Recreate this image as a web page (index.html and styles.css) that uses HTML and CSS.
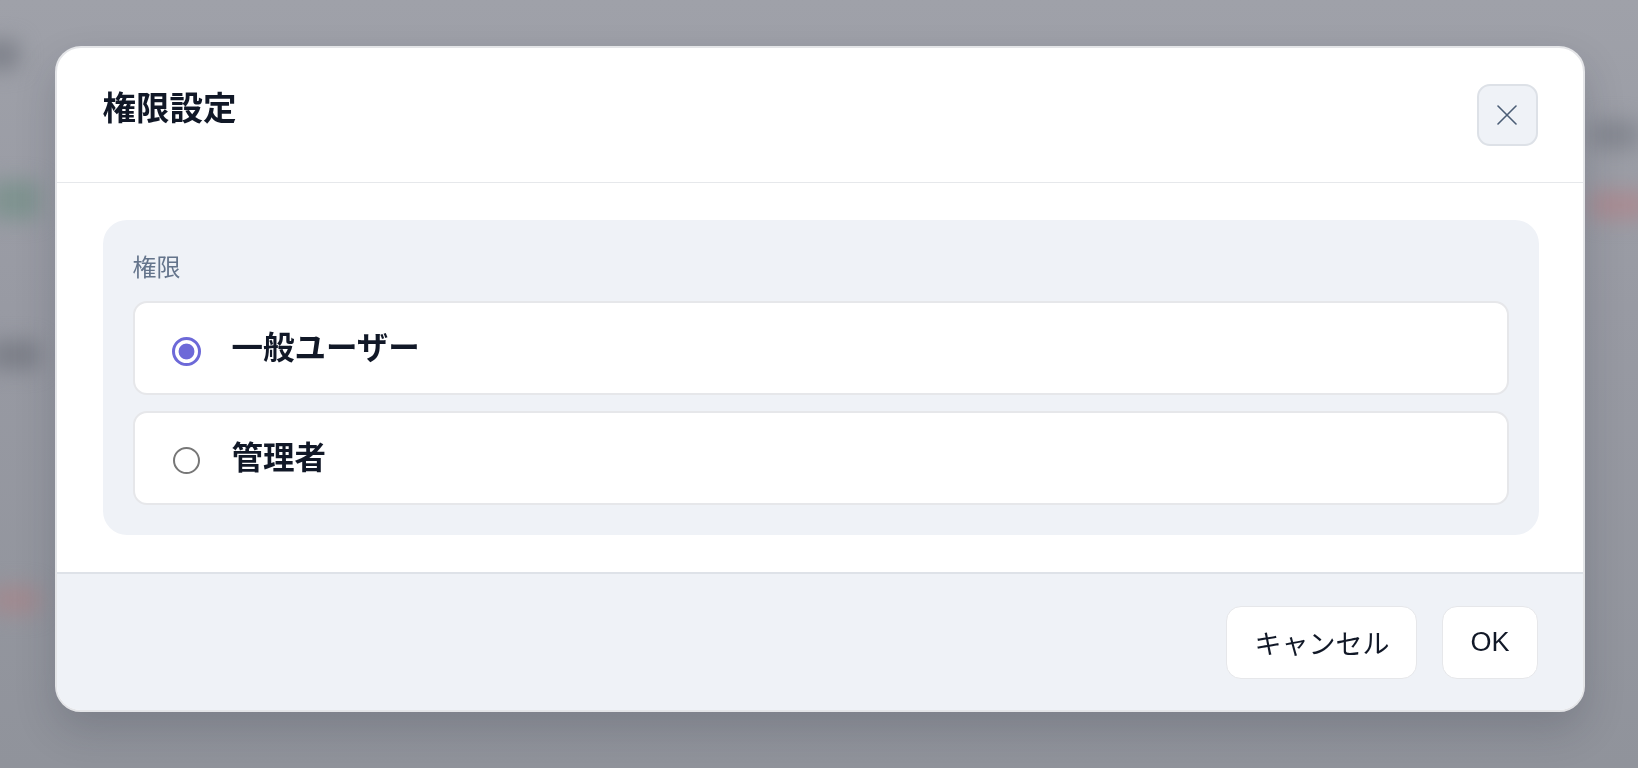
FILE: index.html
```html
<!DOCTYPE html>
<html lang="ja">
<head>
<meta charset="utf-8">
<title>権限設定</title>
<link rel="stylesheet" href="styles.css">
</head>
<body>
<div class="backdrop" aria-hidden="true">
  <div class="blob blob-a"></div>
  <div class="blob blob-b"></div>
  <div class="blob blob-c"></div>
  <div class="blob blob-d"></div>
  <div class="blob blob-e"></div>
  <div class="blob blob-f"></div>
</div>
<div class="overlay">
  <div class="modal" role="dialog" aria-labelledby="modal-title">
    <div class="modal-header">
      <h2 class="modal-title" id="modal-title">権限設定</h2>
      <button class="close-btn" type="button" aria-label="閉じる">
        <svg width="20" height="20" viewBox="0 0 20 20" fill="none" stroke="#4b5d75" stroke-width="1.6" stroke-linecap="round">
          <path d="M1 1L19 19M19 1L1 19"/>
        </svg>
      </button>
    </div>
    <div class="modal-body">
      <div class="field-card">
        <div class="field-label">権限</div>
        <div class="options">
          <label class="option">
            <input class="radio" type="radio" name="role" checked>
            <span class="option-text">一般ユーザー</span>
          </label>
          <label class="option">
            <input class="radio" type="radio" name="role">
            <span class="option-text">管理者</span>
          </label>
        </div>
      </div>
    </div>
    <div class="modal-footer">
      <button class="btn" type="button">キャンセル</button>
      <button class="btn" type="button">OK</button>
    </div>
  </div>
</div>
</body>
</html>
```
FILE: styles.css
```css
* { box-sizing: border-box; }

html, body {
  margin: 0;
  padding: 0;
}

body {
  width: 1638px;
  height: 768px;
  overflow: hidden;
  position: relative;
  background: linear-gradient(180deg, #9fa1a9 0%, #989aa3 40%, #90939b 100%);
  font-family: "Liberation Sans", "Noto Sans CJK JP", sans-serif;
  color: #0f172a;
}

.backdrop {
  position: absolute;
  inset: 0;
  filter: blur(10px);
  z-index: 0;
}

.blob {
  position: absolute;
  border-radius: 8px;
}
.blob-a { left: -20px; top: 40px; width: 40px; height: 30px; background: #80838c; }
.blob-b { left: -10px; top: 180px; width: 50px; height: 40px; background: #7f9390; }
.blob-c { left: -10px; top: 340px; width: 50px; height: 30px; background: #7c7f88; }
.blob-d { left: -10px; top: 585px; width: 50px; height: 30px; background: #a08a90; }
.blob-e { left: 1590px; top: 190px; width: 60px; height: 30px; background: #a88c93; }
.blob-f { left: 1590px; top: 120px; width: 50px; height: 30px; background: #858891; }

.overlay {
  position: relative;
  z-index: 1;
  display: flex;
  justify-content: center;
  padding-top: 46px;
  padding-left: 1px;
}

.modal {
  width: 1530px;
  background: #ffffff;
  border: 2px solid #e4e5e8;
  border-radius: 26px;
  overflow: hidden;
  box-shadow: 0 18px 40px rgba(30, 35, 50, 0.18);
}

.modal-header {
  display: flex;
  justify-content: space-between;
  align-items: flex-start;
  padding: 36px 45px 36px 46px;
  border-bottom: 1px solid #e6e8eb;
}

.modal-title {
  margin: 3px 0 0 0;
  font-size: 33.5px;
  line-height: 44px;
  font-weight: 700;
  color: #111827;
}

.close-btn {
  width: 61px;
  height: 62px;
  display: flex;
  align-items: center;
  justify-content: center;
  padding: 0;
  background: #eff2f7;
  border: 2px solid #dde1e7;
  border-radius: 13px;
  cursor: pointer;
}

.modal-body {
  padding: 37px 44px 37px 46px;
}

.field-card {
  background: #eff2f7;
  border-radius: 24px;
  padding: 30px;
}

.field-label {
  font-size: 24px;
  line-height: 36px;
  color: #64748b;
  margin-bottom: 15px;
}

.options {
  display: flex;
  flex-direction: column;
  gap: 16px;
}

.option {
  display: flex;
  align-items: center;
  gap: 31px;
  height: 94px;
  padding: 0 37px;
  background: #ffffff;
  border: 2px solid #e6e7ea;
  border-radius: 14px;
  cursor: pointer;
}

.radio {
  appearance: none;
  -webkit-appearance: none;
  margin: 5px 1px 0 1px;
  width: 27px;
  height: 27px;
  flex: none;
  border-radius: 50%;
  border: 2.5px solid #777777;
  background: #ffffff;
}

.radio:checked {
  width: 29px;
  height: 29px;
  margin: 6px 0 0 0;
  border: 3px solid #6d69d8;
  background: radial-gradient(circle, #6d69d8 0 7.5px, #ffffff 8.3px);
}

.option-text {
  font-size: 31.5px;
  line-height: 45px;
  font-weight: 700;
  color: #111827;
}

.modal-footer {
  display: flex;
  justify-content: flex-end;
  gap: 25px;
  padding: 32px 45px 31px 46px;
  background: #eff2f7;
  border-top: 2px solid #dee2e8;
}

.btn {
  height: 73px;
  padding: 0 27px;
  font-family: "Liberation Sans", "Noto Sans CJK JP", sans-serif;
  font-size: 27px;
  color: #111827;
  background: #ffffff;
  border: 1.5px solid #e6e7ea;
  border-radius: 15px;
  cursor: pointer;
}
```
